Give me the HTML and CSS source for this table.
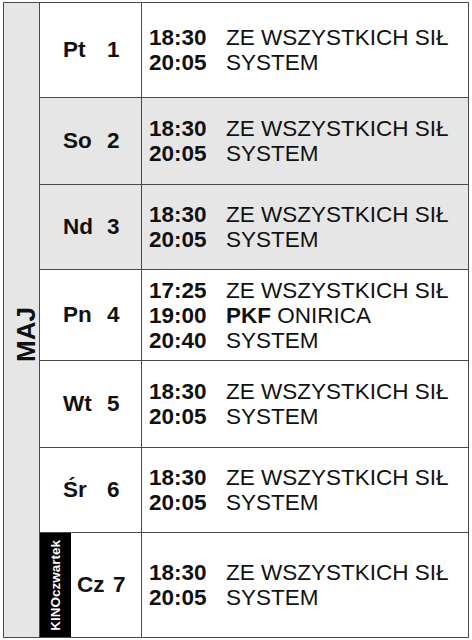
FILE: index.html
```html
<!DOCTYPE html>
<html lang="pl">
<head>
<meta charset="utf-8">
<title>Repertuar — maj</title>
<link rel="stylesheet" href="styles.css">
</head>
<body>
<div class="sched">
  <div class="month"><span class="month-label">MAJ</span></div>

  <div class="day"><span class="nm">Pt</span><span class="no">1</span></div>
  <div class="shows">
    <span class="t">18:30</span><span class="f">ZE WSZYSTKICH SIŁ</span>
    <span class="t">20:05</span><span class="f">SYSTEM</span>
  </div>

  <div class="day alt"><span class="nm">So</span><span class="no">2</span></div>
  <div class="shows alt">
    <span class="t">18:30</span><span class="f">ZE WSZYSTKICH SIŁ</span>
    <span class="t">20:05</span><span class="f">SYSTEM</span>
  </div>

  <div class="day alt"><span class="nm">Nd</span><span class="no">3</span></div>
  <div class="shows alt">
    <span class="t">18:30</span><span class="f">ZE WSZYSTKICH SIŁ</span>
    <span class="t">20:05</span><span class="f">SYSTEM</span>
  </div>

  <div class="day"><span class="nm">Pn</span><span class="no">4</span></div>
  <div class="shows">
    <span class="t">17:25</span><span class="f">ZE WSZYSTKICH SIŁ</span>
    <span class="t">19:00</span><span class="f"><b>PKF</b> ONIRICA</span>
    <span class="t">20:40</span><span class="f">SYSTEM</span>
  </div>

  <div class="day"><span class="nm">Wt</span><span class="no">5</span></div>
  <div class="shows">
    <span class="t">18:30</span><span class="f">ZE WSZYSTKICH SIŁ</span>
    <span class="t">20:05</span><span class="f">SYSTEM</span>
  </div>

  <div class="day"><span class="nm">Śr</span><span class="no">6</span></div>
  <div class="shows">
    <span class="t">18:30</span><span class="f">ZE WSZYSTKICH SIŁ</span>
    <span class="t">20:05</span><span class="f">SYSTEM</span>
  </div>

  <div class="day day-kino">
    <div class="kino"><span class="kino-label">KINOczwartek</span></div>
    <span class="nm">Cz</span><span class="no">7</span>
  </div>
  <div class="shows">
    <span class="t">18:30</span><span class="f">ZE WSZYSTKICH SIŁ</span>
    <span class="t">20:05</span><span class="f">SYSTEM</span>
  </div>
</div>
</body>
</html>
```

FILE: styles.css
```css
* { box-sizing: border-box; }

html, body {
  margin: 0;
  padding: 0;
  background: #ffffff;
}

body {
  font-family: "Liberation Sans", Arial, sans-serif;
  color: #111111;
}

.sched {
  margin: 2px 0 0 3px;
  width: 466px;
  display: grid;
  grid-template-columns: 36px 102px 327px;
  grid-template-rows: 95px 87px 85px 91px 87px 85px 105px;
  border-top: 1px solid #4a4a4a;
  border-left: 1px solid #4a4a4a;
}

.sched > div {
  border-right: 1px solid #4a4a4a;
  border-bottom: 1px solid #4a4a4a;
}

.month {
  grid-row: 1 / -1;
  grid-column: 1;
  background: #e6e6e6;
  display: flex;
  align-items: center;
  justify-content: flex-end;
  padding-top: 28px;
}

.month-label {
  writing-mode: vertical-rl;
  transform: rotate(180deg);
  font-weight: bold;
  font-size: 26px;
  line-height: 26px;
}

.alt { background: #e6e6e6; }

.day {
  display: flex;
  align-items: center;
  padding-left: 23px;
  font-weight: bold;
  font-size: 22.5px;
}

.day .nm { width: 44px; }

.day-kino {
  padding-left: 0;
  align-items: stretch;
}

.day-kino .nm,
.day-kino .no {
  align-self: center;
}

.day-kino .nm {
  width: 36px;
  margin-left: 6px;
}

.kino {
  width: 31px;
  background: #000000;
  display: flex;
  align-items: center;
  justify-content: center;
}

.kino-label {
  writing-mode: vertical-rl;
  transform: rotate(180deg);
  color: #ffffff;
  font-weight: bold;
  font-size: 13.5px;
  line-height: 14px;
}

.shows {
  display: grid;
  grid-template-columns: 77px auto;
  align-content: center;
  padding-left: 7px;
  font-size: 22.5px;
  line-height: 25px;
}

.shows .t { font-weight: bold; }
.shows .f b { font-weight: bold; }
```
